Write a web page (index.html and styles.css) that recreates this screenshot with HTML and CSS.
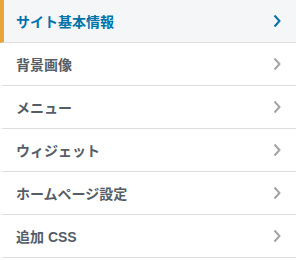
FILE: index.html
```html
<!DOCTYPE html>
<html lang="ja">
<head>
    <meta charset="UTF-8">
    <meta name="viewport" content="width=device-width, initial-scale=1.0">
    <title>カスタマイズ</title>
    <link rel="stylesheet" href="styles.css">
</head>
<body>
    <ul class="panel-list">
        <li class="panel-item active">
            <span class="panel-title">サイト基本情報</span>
            <svg class="chevron" viewBox="0 0 8 14" width="8" height="14"><path d="M1.5 1.5 L6.5 7 L1.5 12.5"/></svg>
        </li>
        <li class="panel-item">
            <span class="panel-title">背景画像</span>
            <svg class="chevron" viewBox="0 0 8 14" width="8" height="14"><path d="M1.5 1.5 L6.5 7 L1.5 12.5"/></svg>
        </li>
        <li class="panel-item">
            <span class="panel-title">メニュー</span>
            <svg class="chevron" viewBox="0 0 8 14" width="8" height="14"><path d="M1.5 1.5 L6.5 7 L1.5 12.5"/></svg>
        </li>
        <li class="panel-item">
            <span class="panel-title">ウィジェット</span>
            <svg class="chevron" viewBox="0 0 8 14" width="8" height="14"><path d="M1.5 1.5 L6.5 7 L1.5 12.5"/></svg>
        </li>
        <li class="panel-item">
            <span class="panel-title">ホームページ設定</span>
            <svg class="chevron" viewBox="0 0 8 14" width="8" height="14"><path d="M1.5 1.5 L6.5 7 L1.5 12.5"/></svg>
        </li>
        <li class="panel-item">
            <span class="panel-title">追加 CSS</span>
            <svg class="chevron" viewBox="0 0 8 14" width="8" height="14"><path d="M1.5 1.5 L6.5 7 L1.5 12.5"/></svg>
        </li>
    </ul>
</body>
</html>
```

FILE: styles.css
```css
body {
    margin: 0;
    background-color: #fff;
    font-family: "Liberation Sans", "Noto Sans CJK JP", sans-serif;
}

.panel-list {
    list-style: none;
    margin: 0;
    padding: 0;
}

.panel-item {
    display: flex;
    align-items: center;
    justify-content: space-between;
    height: 42px;
    padding: 0 15px 0 12px;
    border-left: 4px solid transparent;
    border-bottom: 1px solid #dddddd;
    color: #555d66;
    background-color: #fff;
}

.panel-title {
    font-size: 14px;
    font-weight: bold;
}

.chevron {
    fill: none;
    stroke: #a0a5aa;
    stroke-width: 2;
}

/* Panel activo */
.panel-item.active {
    background-color: #f5f6f7;
    border-left-color: #eaa53a;
    color: #0073aa;
}

.panel-item.active .chevron {
    stroke: #0073aa;
}
```
